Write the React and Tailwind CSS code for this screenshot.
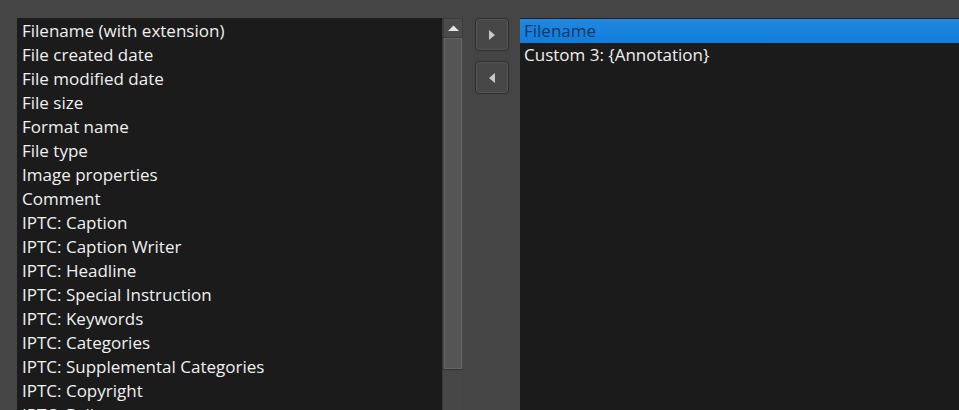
import React from "react";

const left = [
  "Filename (with extension)",
  "File created date",
  "File modified date",
  "File size",
  "Format name",
  "File type",
  "Image properties",
  "Comment",
  "IPTC: Caption",
  "IPTC: Caption Writer",
  "IPTC: Headline",
  "IPTC: Special Instruction",
  "IPTC: Keywords",
  "IPTC: Categories",
  "IPTC: Supplemental Categories",
  "IPTC: Copyright",
  "IPTC: Byline",
];

export default function App() {
  return (
    <div
      className="w-[959px] h-[410px] overflow-hidden bg-[#454545] flex pt-[18px] pl-[17px]"
      style={{ fontFamily: "'Segoe UI', 'Open Sans', 'Noto Sans', sans-serif" }}
    >
      <div className="w-[425px] h-[400px] bg-[#1b1b1b] pt-px overflow-hidden">
        {left.map((t) => (
          <div key={t} className="h-6 leading-6 pl-[5px] text-[17px] text-[#f0f0f0] whitespace-nowrap">
            {t}
          </div>
        ))}
      </div>
      <div className="w-[21px] h-[400px] bg-[#474747] flex flex-col border-l border-[#3a3a3a]">
        <div className="h-5 bg-[#4b4b4b] flex items-center justify-center border border-[#3c3c3c]">
          <svg width="11" height="6" viewBox="0 0 11 6">
            <polygon points="0,6 5.5,0.5 11,6" fill="#e6e6e6" />
          </svg>
        </div>
        <div className="h-[331px] bg-[#555555] border border-[#646464] mx-px" />
        <div className="h-px bg-[#333]" />
        <div className="flex-1 bg-[#474747]" />
      </div>
      <div className="w-[57px] flex flex-col items-center gap-[10px] pt-0">
        <button className="w-[34px] h-[33px] rounded-[4px] bg-[#474747] border border-[#2e2e2e] flex items-center justify-center shadow-[inset_0_0_0_1px_#555]">
          <svg width="6" height="10" viewBox="0 0 6 10">
            <polygon points="0,0 6,5 0,10" fill="#c8c8c8" />
          </svg>
        </button>
        <button className="w-[34px] h-[33px] rounded-[4px] bg-[#474747] border border-[#2e2e2e] flex items-center justify-center shadow-[inset_0_0_0_1px_#555]">
          <svg width="6" height="10" viewBox="0 0 6 10">
            <polygon points="6,0 0,5 6,10" fill="#c8c8c8" />
          </svg>
        </button>
      </div>
      <div className="flex-1 h-[400px] bg-[#1b1b1b] pt-px">
        <div className="h-6 leading-6 pl-[4px] text-[17px] text-[#0f3869] bg-[linear-gradient(#2288e0,#0f7ddc)]">
          Filename
        </div>
        <div className="h-6 leading-6 pl-[4px] text-[17px] text-[#f0f0f0]">Custom 3: {"{Annotation}"}</div>
      </div>
    </div>
  );
}
